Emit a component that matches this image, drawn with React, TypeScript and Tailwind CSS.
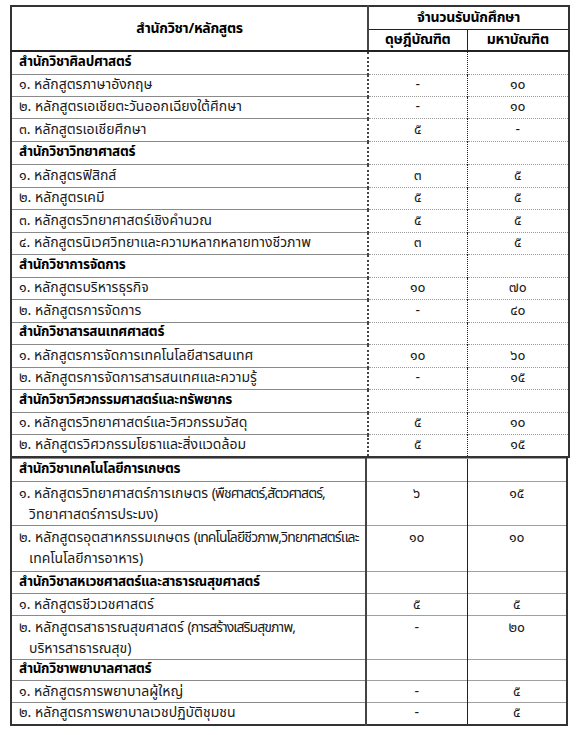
import React from 'react'

type Row =
  | { type: 'section'; label: string; h: number }
  | { type: 'item'; lines: string[]; note?: string; phd: string; master: string; h: number }

const topRows: Row[] = [
  { type: 'section', label: 'สำนักวิชาศิลปศาสตร์', h: 23 },
  { type: 'item', lines: ['๑. หลักสูตรภาษาอังกฤษ'], phd: '-', master: '๑๐', h: 22 },
  { type: 'item', lines: ['๒. หลักสูตรเอเชียตะวันออกเฉียงใต้ศึกษา'], phd: '-', master: '๑๐', h: 22 },
  { type: 'item', lines: ['๓. หลักสูตรเอเชียศึกษา'], phd: '๕', master: '-', h: 23 },
  { type: 'section', label: 'สำนักวิชาวิทยาศาสตร์', h: 23 },
  { type: 'item', lines: ['๑. หลักสูตรฟิสิกส์'], phd: '๓', master: '๕', h: 23 },
  { type: 'item', lines: ['๒. หลักสูตรเคมี'], phd: '๕', master: '๕', h: 22 },
  { type: 'item', lines: ['๓. หลักสูตรวิทยาศาสตร์เชิงคำนวณ'], phd: '๕', master: '๕', h: 23 },
  { type: 'item', lines: ['๔. หลักสูตรนิเวศวิทยาและความหลากหลายทางชีวภาพ'], phd: '๓', master: '๕', h: 22 },
  { type: 'section', label: 'สำนักวิชาการจัดการ', h: 23 },
  { type: 'item', lines: ['๑. หลักสูตรบริหารธุรกิจ'], phd: '๑๐', master: '๗๐', h: 22 },
  { type: 'item', lines: ['๒. หลักสูตรการจัดการ'], phd: '-', master: '๔๐', h: 23 },
  { type: 'section', label: 'สำนักวิชาสารสนเทศศาสตร์', h: 22 },
  { type: 'item', lines: ['๑. หลักสูตรการจัดการเทคโนโลยีสารสนเทศ'], phd: '๑๐', master: '๖๐', h: 23 },
  { type: 'item', lines: ['๒. หลักสูตรการจัดการสารสนเทศและความรู้'], phd: '-', master: '๑๕', h: 22 },
  { type: 'section', label: 'สำนักวิชาวิศวกรรมศาสตร์และทรัพยากร', h: 23 },
  { type: 'item', lines: ['๑. หลักสูตรวิทยาศาสตร์และวิศวกรรมวัสดุ'], phd: '๕', master: '๑๐', h: 22 },
  { type: 'item', lines: ['๒. หลักสูตรวิศวกรรมโยธาและสิ่งแวดล้อม'], phd: '๕', master: '๑๕', h: 23 },
]

const bottomRows: Row[] = [
  { type: 'section', label: 'สำนักวิชาเทคโนโลยีการเกษตร', h: 23 },
  {
    type: 'item',
    lines: ['๑. หลักสูตรวิทยาศาสตร์การเกษตร ', 'วิทยาศาสตร์การประมง)'],
    note: '(พืชศาสตร์,สัตวศาสตร์,',
    phd: '๖',
    master: '๑๕',
    h: 44,
  },
  {
    type: 'item',
    lines: ['๒. หลักสูตรอุตสาหกรรมเกษตร ', 'เทคโนโลยีการอาหาร)'],
    note: '(เทคโนโลยีชีวภาพ,วิทยาศาสตร์และ',
    phd: '๑๐',
    master: '๑๐',
    h: 46,
  },
  { type: 'section', label: 'สำนักวิชาสหเวชศาสตร์และสาธารณสุขศาสตร์', h: 22 },
  { type: 'item', lines: ['๑. หลักสูตรชีวเวชศาสตร์'], phd: '๕', master: '๕', h: 22 },
  {
    type: 'item',
    lines: ['๒. หลักสูตรสาธารณสุขศาสตร์ ', 'บริหารสาธารณสุข)'],
    note: '(การสร้างเสริมสุขภาพ,',
    phd: '-',
    master: '๒๐',
    h: 41,
  },
  { type: 'section', label: 'สำนักวิชาพยาบาลศาสตร์', h: 21 },
  { type: 'item', lines: ['๑. หลักสูตรการพยาบาลผู้ใหญ่'], phd: '-', master: '๕', h: 22 },
  { type: 'item', lines: ['๒. หลักสูตรการพยาบาลเวชปฏิบัติชุมชน'], phd: '-', master: '๕', h: 22 },
]

function Body({ rows, dotted }: { rows: Row[]; dotted: boolean }) {
  const numBorder = dotted ? 'border-t border-dotted border-t-[#9a9a9a]' : 'border-t border-t-[#a0a0a0]'
  return (
    <tbody>
      {rows.map((r, i) => {
        if (r.type === 'section') {
          return (
            <tr key={i} style={{ height: r.h }}>
              <td className="border-t border-t-[#8a8a8a] px-[7px] align-middle text-[13.5px] font-bold tracking-[-0.3px] text-black">
                {r.label}
              </td>
              <td className={`${numBorder} border-l-2 border-l-[#444]`}></td>
              <td className={`${numBorder} border-l border-l-[#222]`}></td>
            </tr>
          )
        }
        const multi = r.lines.length > 1
        const valign = multi ? 'align-top pt-[1px] leading-[21px]' : 'align-middle'
        return (
          <tr key={i} style={{ height: r.h }}>
            <td className={`border-t border-t-[#8a8a8a] px-[7px] ${valign}`}>
              <div className="whitespace-nowrap">
                {r.lines[0]}
                {r.note && <span className="tracking-[-0.9px]">{r.note}</span>}
              </div>
              {r.lines.slice(1).map((l, j) => (
                <div key={j} className="whitespace-nowrap pl-[10px]">
                  {l}
                </div>
              ))}
            </td>
            <td className={`${numBorder} border-l-2 border-l-[#444] text-center ${valign}`}>{r.phd}</td>
            <td className={`${numBorder} border-l border-l-[#222] text-center ${valign}`}>{r.master}</td>
          </tr>
        )
      })}
    </tbody>
  )
}

export default function App() {
  return (
    <div
      className="h-[735px] w-[580px] bg-white pt-[5px] text-[14px] leading-none text-[#1a1a1a]"
      style={{ fontFamily: 'Tahoma, "Noto Sans Thai", "Noto Sans", sans-serif' }}
    >
      <table className="ml-[10px] w-[558px] table-fixed border-collapse border-2 border-[#333]">
        <colgroup>
          <col className="w-[357px]" />
          <col className="w-[99px]" />
          <col className="w-[102px]" />
        </colgroup>
        <thead className="text-[14px] tracking-[-0.3px] text-black">
          <tr className="h-[23px]">
            <th rowSpan={2} className="border-b-2 border-b-[#222] text-center align-middle font-bold">
              สำนักวิชา/หลักสูตร
            </th>
            <th colSpan={2} className="border-l-2 border-l-[#444] border-b border-b-[#222] text-center align-middle font-bold">
              จำนวนรับนักศึกษา
            </th>
          </tr>
          <tr className="h-[22px]">
            <th className="border-l-2 border-l-[#444] border-b-2 border-b-[#222] text-center align-middle font-bold">ดุษฎีบัณฑิต</th>
            <th className="border-l border-l-[#222] border-b-2 border-b-[#222] text-center align-middle font-bold">มหาบัณฑิต</th>
          </tr>
        </thead>
        <Body rows={topRows} dotted />
      </table>
      <table className="ml-[10px] w-[556px] table-fixed border-collapse border-2 border-t-0 border-[#333]">
        <colgroup>
          <col className="w-[355px]" />
          <col className="w-[101px]" />
          <col className="w-[100px]" />
        </colgroup>
        <Body rows={bottomRows} dotted={false} />
      </table>
    </div>
  )
}
